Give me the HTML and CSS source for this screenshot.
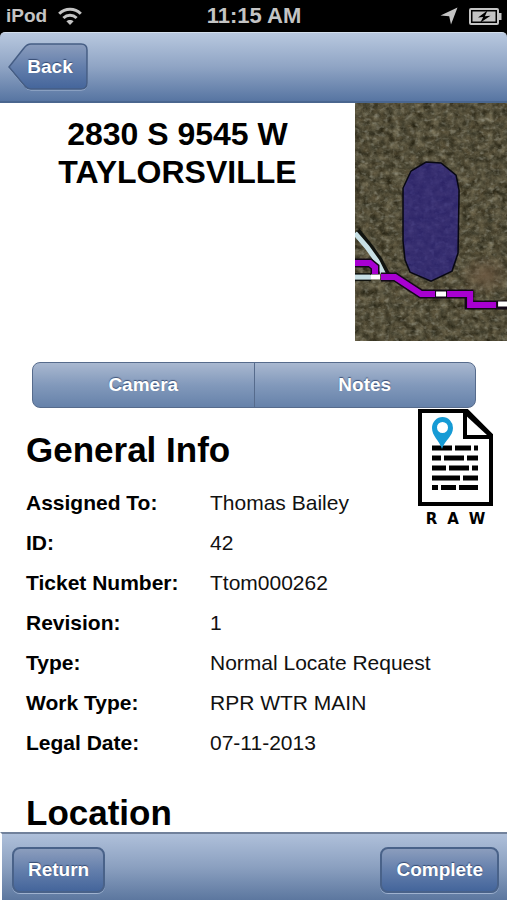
FILE: index.html
```html
<!DOCTYPE html>
<html lang="en">
<head>
<meta charset="utf-8">
<meta name="viewport" content="width=device-width, initial-scale=1">
<title>Ticket</title>
<link rel="stylesheet" href="styles.css">
</head>
<body>
<div class="status">
  <div class="status-side">
    <span class="device">iPod</span>
    <svg class="wifi" viewBox="0 0 24 18" aria-hidden="true">
      <g fill="none" stroke="#c4c4c4" stroke-width="3">
        <path d="M1.2 6.8C7.2.7 16.8.7 22.8 6.8"/>
        <path d="M5.4 11C9.2 7.3 14.8 7.3 18.6 11"/>
      </g>
      <path d="M12 18l-3.600-3.700c2-1.800 5.200-1.800 7.200 0z" fill="#c4c4c4"/>
    </svg>
  </div>
  <span class="clock">11:15 AM</span>
  <div class="status-side status-end">
    <svg class="arrow" viewBox="0 0 18 18" aria-hidden="true"><path d="M17.500.5L11 17.500 9.200 9.300.5 8.400z" fill="#c4c4c4"/></svg>
    <svg class="battery" viewBox="0 0 33 17" aria-hidden="true">
      <rect x="1" y="1" width="28" height="15" rx="1" fill="none" stroke="#c4c4c4" stroke-width="2"/>
      <rect x="3.500" y="3.500" width="23" height="10" fill="#c4c4c4"/>
      <path d="M30 5h2.500v7H30z" fill="#c4c4c4"/>
      <path d="M18.500 2.500L9 9.600l5.200-.5-3 5.700 10.300-7-5.600.4z" fill="#000"/>
    </svg>
  </div>
</div>

<header class="navbar">
  <button class="back" type="button">
    <svg class="back-shape" viewBox="0 0 80 48" aria-hidden="true">
      <defs>
        <linearGradient id="backFill" x1="0" y1="0" x2="0" y2="1">
          <stop offset="0" stop-color="#8b9dbd"/>
          <stop offset=".5" stop-color="#647fac"/>
          <stop offset="1" stop-color="#44659b"/>
        </linearGradient>
      </defs>
      <path d="M23 2H73Q79 2 79 8V41Q79 47 73 47H23Q19 47 16 43L1 25 16 6Q19 2 23 2Z" fill="none" stroke="#a9bbd6"/>
      <path d="M23 1H73Q79 1 79 7V40Q79 46 73 46H23Q19 46 16 42L1 24 16 5Q19 1 23 1Z" fill="url(#backFill)" stroke="#455d84" stroke-width="1.500"/>
    </svg>
    <span class="back-text">Back</span>
  </button>
</header>

<main class="content">
  <section class="summary">
    <h1 class="address">2830 S 9545 W<br>TAYLORSVILLE</h1>
    <svg class="map" viewBox="0 0 152 238" role="img" aria-label="Map">
      <defs>
        <filter id="ground" x="0" y="0" width="100%" height="100%" color-interpolation-filters="sRGB">
          <feTurbulence type="fractalNoise" baseFrequency=".13 .15" numOctaves="4" seed="23"/>
          <feColorMatrix values=".34 .22 0 0 .03  .31 .23 0 0 .02  .26 .22 0 0 -.03  0 0 0 0 1"/>
        </filter>
        <filter id="roofs" x="0" y="0" width="100%" height="100%" color-interpolation-filters="sRGB">
          <feTurbulence type="fractalNoise" baseFrequency=".2 .26" numOctaves="2" seed="4"/>
          <feColorMatrix values="0 0 0 0 .62  0 0 0 0 .62  0 0 0 0 .56  2.600 0 0 0 -1.350"/>
        </filter>
        <radialGradient id="dirt"><stop offset="0" stop-color="#705b44" stop-opacity=".8"/><stop offset="1" stop-color="#705b44" stop-opacity="0"/></radialGradient>
      </defs>
      <rect width="152" height="238" fill="#4c483a"/>
      <rect width="152" height="238" filter="url(#ground)"/>
      <rect width="152" height="238" filter="url(#roofs)" opacity=".6"/>
      <ellipse cx="130" cy="172" rx="27" ry="21" fill="url(#dirt)"/>
      <path d="M71 59L86 60 101 72 104 87 103 150 97 168 76 178 55 169 50 157 48 138V85L56 68Z" fill="#2c2383" fill-opacity=".74" stroke="#080813" stroke-width="1.500"/>
      <g fill="none">
        <path d="M2 128L14 143 24 157 32 172" stroke="#11130f" stroke-width="7"/>
        <path d="M0 130L12 144 22 158 30 174" stroke="#c8e0e5" stroke-width="5"/>
        <path d="M0 174H16" stroke="#11130f" stroke-width="8"/>
        <path d="M0 174H16" stroke="#c8e0e5" stroke-width="5"/>
        <path d="M0 160H15L20 164V172M26 174H40L66 191H114V202H152" stroke="#120817" stroke-width="9"/>
        <path d="M0 160H15L20 164V171M26 174H40L66 191H80M92 191H115V202H141" stroke="#a800d1" stroke-width="6"/>
        <path d="M16 174H25M81 191H91M143 201H152" stroke="#fff" stroke-width="5"/>
      </g>
    </svg>
  </section>

  <div class="segments">
    <button class="segment" type="button">Camera</button>
    <button class="segment" type="button">Notes</button>
  </div>

  <div class="details">
    <section class="general">
      <h2 class="heading">General Info</h2>
      <dl class="fields">
        <dt>Assigned To:</dt><dd>Thomas Bailey</dd>
        <dt>ID:</dt><dd>42</dd>
        <dt>Ticket Number:</dt><dd>Ttom000262</dd>
        <dt>Revision:</dt><dd>1</dd>
        <dt>Type:</dt><dd>Normal Locate Request</dd>
        <dt>Work Type:</dt><dd>RPR WTR MAIN</dd>
        <dt>Legal Date:</dt><dd>07-11-2013</dd>
      </dl>
      <h2 class="heading">Location</h2>
    </section>
    <button class="raw" type="button">
      <svg class="raw-icon" viewBox="0 0 75 98" aria-hidden="true">
        <path d="M2 2H49L73 26V95H2Z" fill="#fff" stroke="#000" stroke-width="4"/>
        <path d="M47 2V28H73" fill="none" stroke="#000" stroke-width="4"/>
        <path d="M47 3L73 27" stroke="#000" stroke-width="4"/>
        <path d="M14 39H34M37 39H53M56 39H60M14 49H23M26 49H46M49 49H60M14 59H28M31 59H51M54 59H60M14 69H42M45 69H60M14 78.500H20M23 78.500H38M41 78.500H60" stroke="#000" stroke-width="5"/>
        <path fill-rule="evenodd" d="M24 40C21 31 14 27 14 19A10.500 11 0 0 1 35 19C35 27 27 31 24 40ZM24.500 13A5.500 5.500 0 1 0 24.500 24 5.500 5.500 0 1 0 24.500 13Z" fill="#169bd5"/>
      </svg>
      <span class="raw-text"><span>R</span><span>A</span><span>W</span></span>
    </button>
  </div>
</main>

<footer class="toolbar">
  <button class="action" type="button">Return</button>
  <button class="action" type="button">Complete</button>
</footer>
</body>
</html>
```
FILE: styles.css
```css
* { box-sizing: border-box; }

body {
  margin: 0;
  height: 100vh;
  display: flex;
  flex-direction: column;
  background: #000;
  color: #000;
  font-family: "Liberation Sans", Arial, sans-serif;
}

button {
  margin: 0;
  padding: 0;
  border: 0;
  background: none;
  color: #fff;
  font: bold 19px/24px "Liberation Sans", Arial, sans-serif;
  text-shadow: 0 -1px 1px rgba(30, 50, 90, 0.7);
}

.status {
  flex: none;
  display: flex;
  align-items: center;
  height: 32px;
  padding: 0 5px 0 6px;
  color: #c4c4c4;
  font-weight: bold;
}

.status-side {
  flex: 1;
  display: flex;
  align-items: center;
  gap: 11px;
}

.status-end { justify-content: flex-end; }
.device { font-size: 19px; }
.clock { font-size: 22px; }
.wifi { width: 24px; height: 18px; }
.arrow { width: 18px; height: 18px; }
.battery { width: 33px; height: 17px; }

.navbar {
  flex: none;
  display: flex;
  align-items: center;
  height: 71px;
  padding: 0 8px;
  border-top: 1px solid #d3deec;
  border-bottom: 2px solid #4a668f;
  border-radius: 5px 5px 0 0;
  background: linear-gradient(#b8c8df, #8fa4c4 50%, #5775a2);
}

.back {
  position: relative;
  width: 80px;
  height: 48px;
  padding-left: 4px;
}

.back-shape {
  position: absolute;
  inset: 0;
  width: 100%;
  height: 100%;
}

.back-text { position: relative; }

.content {
  flex: 1;
  min-height: 0;
  overflow-y: auto;
  scrollbar-width: none;
  background: #fff;
}

.summary {
  display: flex;
  justify-content: space-between;
}

.address {
  flex: 1;
  margin: 0;
  padding-top: 12px;
  font-size: 32px;
  line-height: 38px;
  text-align: center;
}

.map {
  display: block;
  flex: none;
  width: 30%;
}

.segments {
  display: flex;
  margin: 21px 31px 0 32px;
  border: 1px solid #566b8c;
  border-radius: 8px;
  background: linear-gradient(#a9b8d0, #8299bb 50%, #6682aa);
}

.segment {
  flex: 1;
  height: 44px;
}

.segment + .segment { border-left: 1px solid #566b8c; }

.details {
  display: flex;
  align-items: flex-start;
  padding: 1px 14px 0 26px;
}

.general {
  flex: 1;
  min-width: 0;
  padding-top: 21px;
}

.heading {
  margin: 0;
  font-size: 35px;
  line-height: 40px;
}

.fields {
  display: grid;
  grid-template-columns: 184px 1fr;
  margin: 13px 0 30px;
  font-size: 21px;
  line-height: 40px;
}

.fields dt { font-weight: bold; }
.fields dd { margin: 0; color: #111; white-space: nowrap; }

.raw {
  flex: none;
  color: #000;
  text-shadow: none;
}

.raw-icon {
  display: block;
  width: 75px;
  height: 98px;
}

.raw-text {
  display: flex;
  justify-content: center;
  gap: 10px;
  margin-top: 4px;
  font: bold 15px/16px "DejaVu Sans", sans-serif;
}

.toolbar {
  flex: none;
  display: flex;
  justify-content: space-between;
  align-items: center;
  height: 68px;
  padding: 6px 8px 0 10px;
  border-top: 2px solid #71819b;
  border-left: 2px solid #fff;
  background: linear-gradient(#afc0da, #8ba0c0 50%, #5c779f);
}

.action {
  height: 46px;
  padding: 0 14px;
  border: 2px solid #496289;
  border-radius: 8px;
  background: linear-gradient(#8b9dbd, #647fac 50%, #44659b);
  box-shadow: 0 1px 0 #9fb2cf;
}
```
